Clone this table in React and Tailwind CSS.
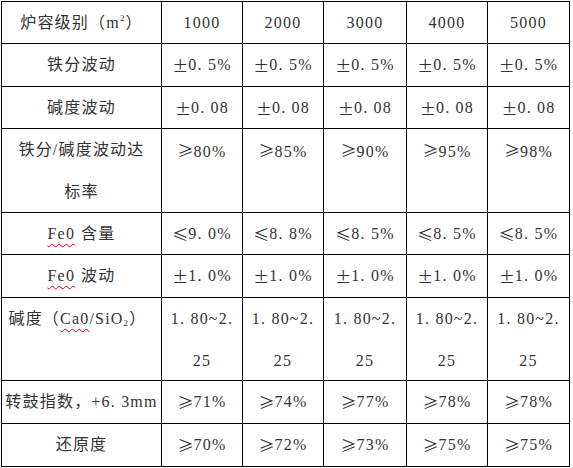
import React from "react";

const cols = ["1000", "2000", "3000", "4000", "5000"];

const Squiggle = ({ children }) => (
  <span className="underline decoration-wavy decoration-red-600 decoration-1 underline-offset-[4px]">
    {children}
  </span>
);

// full-width symbols like the song-style font in the picture
const S = ({ children }) => (
  <span className="inline-block w-[16px] text-left font-['Noto_Sans_CJK_SC',sans-serif] tracking-normal">
    {children}
  </span>
);

const pm = (t) => (
  <>
    <S>±</S>
    {t}
  </>
);
const ge = (t) => (
  <>
    <S>≥</S>
    {t}
  </>
);
const le = (t) => (
  <>
    <S>≤</S>
    {t}
  </>
);

const rows = [
  { label: "铁分波动", h: "h-[42px]", vals: Array(5).fill(pm("0. 5%")) },
  { label: "碱度波动", h: "h-[41px]", vals: Array(5).fill(pm("0. 08")) },
  {
    label: (
      <>
        铁分/碱度波动达
        <br />
        标率
      </>
    ),
    h: "h-[83px]",
    tall: true,
    vals: [ge("80%"), ge("85%"), ge("90%"), ge("95%"), ge("98%")],
  },
  {
    label: (
      <>
        <Squiggle>Fe0</Squiggle>
        <span className="ml-[6px]">含量</span>
      </>
    ),
    h: "h-[41px]",
    vals: [le("9. 0%"), le("8. 8%"), le("8. 5%"), le("8. 5%"), le("8. 5%")],
  },
  {
    label: (
      <>
        <Squiggle>Fe0</Squiggle>
        <span className="ml-[6px]">波动</span>
      </>
    ),
    h: "h-[42px]",
    vals: Array(5).fill(pm("1. 0%")),
  },
  {
    label: (
      <span className="mr-[8px]">
        碱度（<Squiggle>Ca0</Squiggle>/SiO<sub className="text-[9px]">2</sub>）
      </span>
    ),
    h: "h-[82px]",
    tall: true,
    vals: Array(5).fill(
      <>
        1. 80~2.
        <br />
        25
      </>
    ),
  },
  {
    label: "转鼓指数，+6. 3mm",
    h: "h-[42px]",
    vals: [ge("71%"), ge("74%"), ge("77%"), ge("78%"), ge("78%")],
  },
  {
    label: "还原度",
    h: "h-[42px]",
    vals: [ge("70%"), ge("72%"), ge("73%"), ge("75%"), ge("75%")],
  },
];

export default function App() {
  const cell = (tall, h) =>
    tall
      ? `bg-white ${h} text-center leading-[42px]`
      : `bg-white ${h} flex items-center justify-center`;

  return (
    <div className="w-[573px] h-[468px] bg-white pt-px pl-px">
      <div className="grid grid-cols-[159px_80px_80px_82px_80px_81px] gap-px bg-black p-px w-[569px] text-[16px] tracking-[1.2px] text-[#333] whitespace-nowrap font-['Liberation_Serif','Noto_Sans_CJK_SC',serif]">
        {/* header row */}
        <div className="bg-white h-[41px] flex items-center justify-center">
          炉容级别（m<sup className="text-[9px]">2</sup>）
        </div>
        {cols.map((c) => (
          <div key={c} className="bg-white h-[41px] flex items-center justify-center">
            {c}
          </div>
        ))}

        {rows.map((r, i) => (
          <React.Fragment key={i}>
            <div className={cell(r.tall, r.h)}>{r.label}</div>
            {r.vals.map((v, j) => (
              <div key={j} className={cell(r.tall, r.h)}>
                {v}
              </div>
            ))}
          </React.Fragment>
        ))}
      </div>
    </div>
  );
}
